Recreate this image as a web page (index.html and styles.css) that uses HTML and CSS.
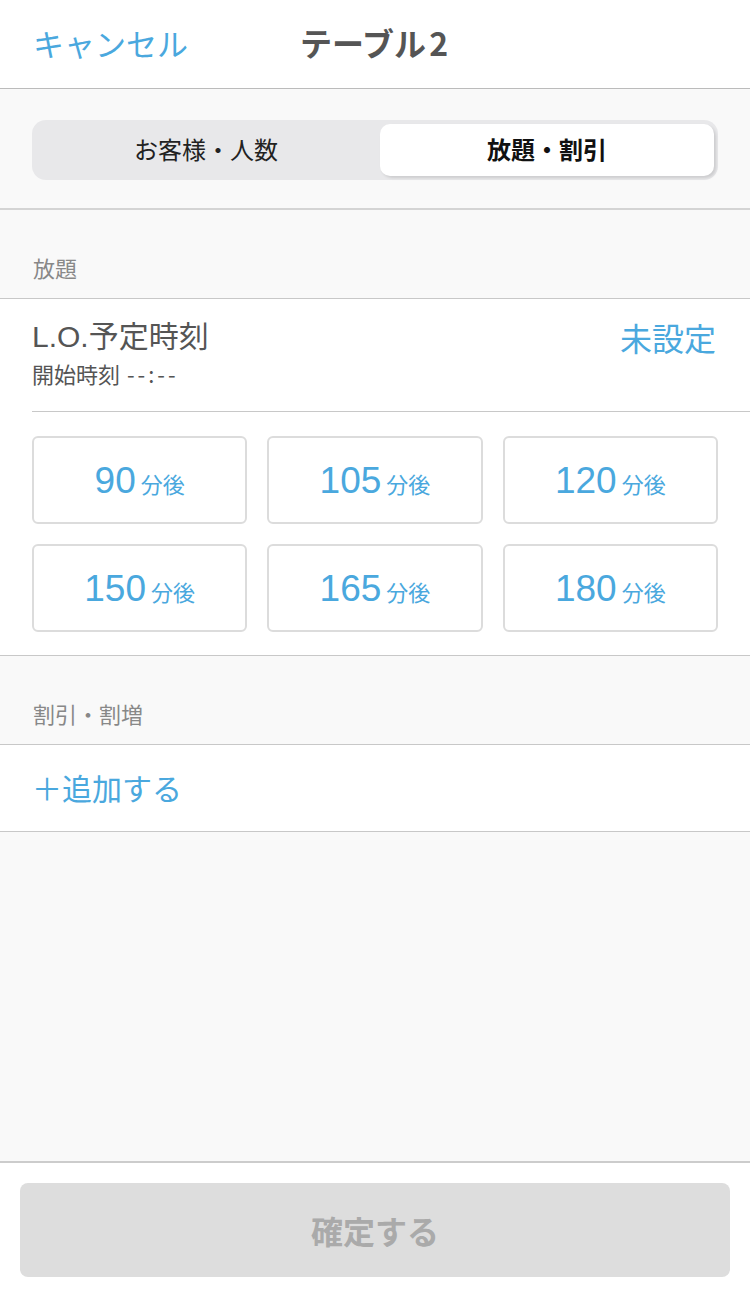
FILE: index.html
```html
<!DOCTYPE html>
<html lang="ja">
<head>
    <meta charset="UTF-8">
    <meta name="viewport" content="width=device-width, initial-scale=1.0">
    <title>テーブル2</title>
    <link rel="stylesheet" href="styles.css">
</head>
<body>

<div id="app">
    <header class="nav-bar">
        <a class="nav-cancel">キャンセル</a>
        <h1 class="nav-title">テーブル 2</h1>
    </header>

    <div class="segment-area">
        <div class="segment">
            <div class="segment-item">お客様・人数</div>
            <div class="segment-item active">放題・割引</div>
        </div>
    </div>

    <div class="section-label">放題</div>
    <div class="card">
        <div class="lo-row">
            <div class="lo-text">
                <div class="lo-title">L.O.予定時刻</div>
                <div class="lo-sub">開始時刻 <span class="lo-time">--:--</span></div>
            </div>
            <div class="lo-value">未設定</div>
        </div>
        <div class="time-grid">
            <button class="time-btn"><span class="num">90</span><span class="unit">分後</span></button>
            <button class="time-btn"><span class="num">105</span><span class="unit">分後</span></button>
            <button class="time-btn"><span class="num">120</span><span class="unit">分後</span></button>
            <button class="time-btn"><span class="num">150</span><span class="unit">分後</span></button>
            <button class="time-btn"><span class="num">165</span><span class="unit">分後</span></button>
            <button class="time-btn"><span class="num">180</span><span class="unit">分後</span></button>
        </div>
    </div>

    <div class="section-label">割引・割増</div>
    <div class="card">
        <div class="add-row">＋追加する</div>
    </div>

    <div class="spacer"></div>

    <footer class="footer">
        <button class="confirm-btn" disabled>確定する</button>
    </footer>
</div>

</body>
</html>
```

FILE: styles.css
```css
* {
    box-sizing: border-box;
}

body {
    margin: 0;
    font-family: "Liberation Sans", "Noto Sans CJK JP", sans-serif;
    background-color: #f9f9f9;
    color: #555;
}

#app {
    display: flex;
    flex-direction: column;
    height: 1294px;
}

.nav-bar {
    height: 89px;
    background-color: #fff;
    border-bottom: 1px solid #bbb;
    display: flex;
    align-items: center;
    padding-left: 33px;
    padding-bottom: 4px;
}

.nav-cancel {
    color: #4aa8de;
    font-size: 31px;
    font-family: "Noto Sans CJK JP", sans-serif;
    width: 267px;
}

.nav-title {
    margin: 0;
    font-size: 32px;
    font-weight: bold;
    color: #555;
    font-family: "Noto Sans CJK JP", sans-serif;
    word-spacing: -4px;
}

.segment-area {
    height: 121px;
    padding: 31px 32px 0;
    border-bottom: 2px solid #d4d4d4;
}

.segment {
    display: flex;
    height: 60px;
    background-color: #e8e8ea;
    border-radius: 14px;
    padding: 4px 4px 4px 0;
}

.segment-item {
    flex: 1;
    display: flex;
    align-items: center;
    justify-content: center;
    padding-bottom: 3px;
    font-family: "Noto Sans CJK JP", sans-serif;
    font-size: 24px;
    color: #222;
}

.segment-item.active {
    flex: 0 0 334px;
    background-color: #fff;
    border-radius: 10px;
    font-weight: bold;
    color: #111;
    box-shadow: 2px 2px 3px rgba(0, 0, 0, 0.12);
}

.section-label {
    height: 89px;
    padding: 41px 33px 0;
    font-family: "Noto Sans CJK JP", sans-serif;
    font-size: 22px;
    color: #888;
    border-bottom: 1px solid #c8c8c8;
}

.card {
    background-color: #fff;
    border-bottom: 1px solid #c8c8c8;
    padding-left: 32px;
}

.lo-row {
    display: flex;
    justify-content: space-between;
    padding: 17px 34px 22px 0;
    border-bottom: 1px solid #c8c8c8;
    height: 113px;
}

.lo-title {
    font-size: 30px;
    color: #555;
    line-height: 42px;
    font-family: "Liberation Sans", "Noto Sans CJK JP", sans-serif;
}

.lo-sub {
    font-size: 22px;
    color: #555;
    line-height: 30px;
    font-family: "Noto Sans CJK JP", sans-serif;
}

.lo-time {
    letter-spacing: 3px;
    margin-left: 2px;
}

.lo-value {
    font-size: 32px;
    color: #4aa8de;
    line-height: 42px;
    font-family: "Noto Sans CJK JP", sans-serif;
}

.time-grid {
    display: grid;
    grid-template-columns: repeat(3, 1fr);
    gap: 20px;
    padding: 24px 32px 23px 0;
}

.time-btn {
    height: 88px;
    background-color: #fff;
    border: 2px solid #dcdcdc;
    border-radius: 6px;
    display: flex;
    align-items: baseline;
    justify-content: center;
    padding-top: 22px;
    color: #4aa8de;
    font-family: "Liberation Sans", "Noto Sans CJK JP", sans-serif;
}

.time-btn .num {
    font-size: 37px;
}

.time-btn .unit {
    font-size: 22px;
    margin-left: 5px;
    font-family: "Noto Sans CJK JP", sans-serif;
}

.add-row {
    height: 86px;
    display: flex;
    align-items: center;
    padding-bottom: 2px;
    font-size: 30px;
    color: #4aa8de;
    font-family: "Noto Sans CJK JP", sans-serif;
}

.spacer {
    flex: 1;
    border-bottom: 2px solid #ccc;
}

.footer {
    height: 131px;
    background-color: #fff;
    padding: 20px 20px 16px;
}

.confirm-btn {
    width: 100%;
    height: 94px;
    background-color: #dddddd;
    border: none;
    border-radius: 8px;
    font-size: 32px;
    font-weight: bold;
    color: #aaa;
    font-family: "Noto Sans CJK JP", sans-serif;
}
```
